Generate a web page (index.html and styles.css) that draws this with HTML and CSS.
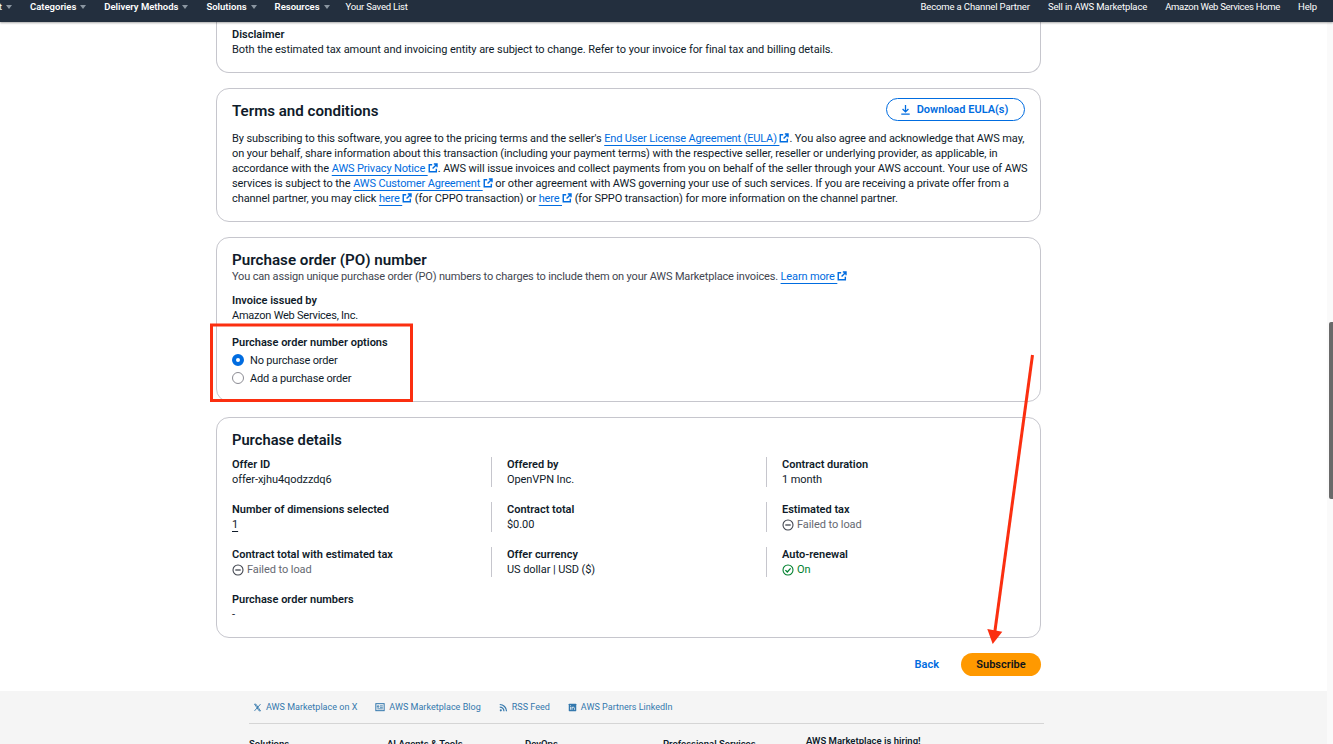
FILE: index.html
```html
<!DOCTYPE html>
<html lang="en">
<head>
<meta charset="utf-8">
<title>Subscribe - AWS Marketplace</title>
<link rel="stylesheet" href="styles.css">
</head>
<body>
<svg width="0" height="0" class="defs">
  <symbol id="ext" viewBox="0 0 12 12"><path d="M5 2H1.500v8.500H10V7M7 1.200h3.800V5M10.600 1.400 5.500 6.500" fill="none" stroke="currentColor" stroke-width="1.700"/></symbol>
  <symbol id="minus" viewBox="0 0 12 12"><circle cx="6" cy="6" r="5" fill="none" stroke="currentColor" stroke-width="1.100"/><path d="M3.300 6h5.400" stroke="currentColor" stroke-width="1.300"/></symbol>
</svg>
<header class="topbar">
  <nav class="nav-left">
    <span class="nav-item nav-cut">t<i class="caret"></i></span>
    <span class="nav-item strong">Categories<i class="caret"></i></span>
    <span class="nav-item strong">Delivery Methods<i class="caret"></i></span>
    <span class="nav-item strong">Solutions<i class="caret"></i></span>
    <span class="nav-item strong">Resources<i class="caret"></i></span>
    <span class="nav-item nav-saved">Your Saved List</span>
  </nav>
  <nav class="nav-right">
    <span class="nav-item">Become a Channel Partner</span>
    <span class="nav-item">Sell in AWS Marketplace</span>
    <span class="nav-item nav-home">Amazon Web Services Home</span>
    <span class="nav-item">Help</span>
  </nav>
</header>
<main class="column">
  <section class="card card-first">
    <div class="label">Disclaimer</div>
    <div class="value">Both the estimated tax amount and invoicing entity are subject to change. Refer to your invoice for final tax and billing details.</div>
  </section>
  <section class="card card-terms">
    <div class="terms-head">
      <h2 class="title title-terms">Terms and conditions</h2>
      <a class="btn-outline"><svg class="dl" viewBox="0 0 12 12"><path d="M6 1v7.200M2.800 5.400 6 8.600l3.200-3.200M1.400 11h9.200" fill="none" stroke="currentColor" stroke-width="1.400"/></svg>Download EULA(s)</a>
    </div>
    <p class="para">By subscribing to this software, you agree to the pricing terms and the seller's <a class="link">End User License Agreement (EULA)&nbsp;</a><svg class="ext"><use href="#ext"/></svg>. You also agree and acknowledge that AWS may,<br>on your behalf, share information about this transaction (including your payment terms) with the respective seller, reseller or underlying provider, as applicable, in<br>accordance with the <a class="link">AWS Privacy Notice&nbsp;</a><svg class="ext"><use href="#ext"/></svg>. AWS will issue invoices and collect payments from you on behalf of the seller through your AWS account. Your use of AWS<br>services is subject to the <a class="link">AWS Customer Agreement&nbsp;</a><svg class="ext"><use href="#ext"/></svg> or other agreement with AWS governing your use of such services. If you are receiving a private offer from a<br>channel partner, you may click <a class="link">here&nbsp;</a><svg class="ext"><use href="#ext"/></svg> (for CPPO transaction) or <a class="link">here&nbsp;</a><svg class="ext"><use href="#ext"/></svg> (for SPPO transaction) for more information on the channel partner.</p>
  </section>
  <section class="card card-po">
    <h2 class="title title-po">Purchase order (PO) number</h2>
    <div class="desc">You can assign unique purchase order (PO) numbers to charges to include them on your AWS Marketplace invoices. <a class="link">Learn more&nbsp;</a><svg class="ext"><use href="#ext"/></svg></div>
    <div class="field-invoice">
      <div class="label">Invoice issued by</div>
      <div class="value value-tight">Amazon Web Services, Inc.</div>
    </div>
    <div class="label options-label">Purchase order number options</div>
    <div class="radio-row"><i class="radio radio-on"></i>No purchase order</div>
    <div class="radio-row"><i class="radio"></i>Add a purchase order</div>
  </section>
  <section class="card card-details">
    <h2 class="title title-details">Purchase details</h2>
    <div class="grid">
      <div class="cell"><div class="label">Offer ID</div><div class="value">offer-xjhu4qodzzdq6</div></div>
      <div class="cell cell-mid"><div class="label">Offered by</div><div class="value">OpenVPN Inc.</div></div>
      <div class="cell cell-mid"><div class="label">Contract duration</div><div class="value">1 month</div></div>
      <div class="cell"><div class="label">Number of dimensions selected</div><div class="value"><span class="under">1</span></div></div>
      <div class="cell cell-mid"><div class="label">Contract total</div><div class="value">$0.00</div></div>
      <div class="cell cell-mid"><div class="label">Estimated tax</div><div class="value status-muted"><svg class="status"><use href="#minus"/></svg>Failed to load</div></div>
      <div class="cell"><div class="label">Contract total with estimated tax</div><div class="value status-muted"><svg class="status"><use href="#minus"/></svg>Failed to load</div></div>
      <div class="cell cell-mid"><div class="label">Offer currency</div><div class="value">US dollar | USD ($)</div></div>
      <div class="cell cell-mid"><div class="label">Auto-renewal</div><div class="value status-ok"><svg class="status" viewBox="0 0 12 12"><circle cx="6" cy="6" r="5" fill="none" stroke="currentColor" stroke-width="1.100"/><path d="M3.400 6.100 5.300 8l3.300-3.600" fill="none" stroke="currentColor" stroke-width="1.300"/></svg>On</div></div>
      <div class="cell"><div class="label">Purchase order numbers</div><div class="value">-</div></div>
    </div>
  </section>
  <div class="actions">
    <a class="back">Back</a>
    <a class="subscribe">Subscribe</a>
  </div>
</main>
<footer class="footer">
  <div class="footer-inner">
    <div class="social">
      <a class="social-link"><svg class="si" viewBox="0 0 12 12"><path d="M2 1.500h1.800l6.200 9H8.200zM10 1.500 2 10.500" fill="none" stroke="currentColor" stroke-width="1.200"/></svg>AWS Marketplace on X</a>
      <a class="social-link"><svg class="si si-wide" viewBox="0 0 12 12"><rect x="1" y="2" width="10" height="8.400" fill="none" stroke="currentColor" stroke-width="1.200"/><path d="M2.800 4.600h1.800v1.600H2.800zM6 4.600h3.400M6 6.400h3.400M2.800 8.200h6.600" fill="none" stroke="currentColor" stroke-width="1"/></svg>AWS Marketplace Blog</a>
      <a class="social-link"><svg class="si" viewBox="0 0 12 12"><circle cx="2.400" cy="9.800" r="1.400" fill="currentColor"/><path d="M1 5.400a5.600 5.600 0 0 1 5.600 5.600M1 2a9 9 0 0 1 9 9" fill="none" stroke="currentColor" stroke-width="1.600"/></svg>RSS Feed</a>
      <a class="social-link"><svg class="si" viewBox="0 0 12 12"><rect x="1" y="1" width="10" height="10" rx=".6" fill="currentColor"/><path d="M3.400 5v4M5.400 9V5M5.400 6.600c.4-1.300 3.200-1.500 3.200.6V9M3.400 3v1" fill="none" stroke="#f5f5f5" stroke-width="1.100"/></svg>AWS Partners LinkedIn</a>
    </div>
    <div class="footer-cols">
      <div class="fcol">Solutions</div>
      <div class="fcol">AI Agents &amp; Tools</div>
      <div class="fcol">DevOps</div>
      <div class="fcol fcol-wide">Professional Services</div>
      <div class="fcol fcol-hiring">AWS Marketplace is hiring!</div>
    </div>
  </div>
</footer>
<svg class="annot" viewBox="0 0 1333 744">
  <rect x="211.500" y="325" width="200" height="75.500" fill="none" stroke="#fb2f10" stroke-width="3"/>
  <path d="M1032.500 355 994.800 632" fill="none" stroke="#fb2f10" stroke-width="3"/>
  <path d="M987.300 629 1002.300 631.700 992.700 644z" fill="#fb2f10"/>
</svg>
<div class="scrollbar"><div class="thumb"></div></div>
</body>
</html>
```

FILE: styles.css
```css
* { box-sizing: border-box; }
html, body { margin: 0; height: 744px; overflow: hidden; }
body {
  font-family: Roboto, "Noto Sans", sans-serif;
  font-size: 11px;
  letter-spacing: -0.07px;
  line-height: 15px;
  color: #0f1b2a;
  background: #fff;
  display: flex;
  flex-direction: column;
  position: relative;
}
.defs { position: absolute; }
.topbar {
  height: 22px;
  flex: none;
  background: #232f3e;
  box-shadow: 0 1px 2px rgba(0,0,0,.35);
  color: #fff;
  display: flex;
  justify-content: space-between;
  align-items: flex-start;
  font-size: 9.500px;
  letter-spacing: -0.13px;
  line-height: 14px;
  position: relative;
  z-index: 2;
  padding-right: 16px;
}
.nav-left, .nav-right { display: flex; align-items: center; }
.nav-left { gap: 18px; margin-left: -1px; }
.nav-right { gap: 18px; }
.strong { font-weight: 600; letter-spacing: 0; }
.nav-saved { margin-left: -2px; letter-spacing: -0.2px; }
.nav-home { letter-spacing: -0.3px; }
.nav-item { white-space: nowrap; }
.caret {
  display: inline-block;
  margin-left: 4px;
  vertical-align: 1px;
  border: 3.500px solid transparent;
  border-top: 4px solid #8b96a1;
  border-bottom: 0;
}
.column {
  width: 825px;
  margin-left: 216px;
  flex: none;
  display: flex;
  flex-direction: column;
  gap: 15px;
}
.card {
  border: 1px solid #c6c6cd;
  border-radius: 13px;
  padding: 0 15px;
}
.card-first {
  border-top: 0;
  border-radius: 0 0 13px 13px;
  height: 51px;
  padding-top: 5px;
}
.card-terms { height: 134px; padding-top: 9px; }
.card-po { height: 165px; padding-top: 13px; }
.card-details { height: 221px; padding-top: 13px; }
.label { font-weight: 600; letter-spacing: 0; }
.value-tight { letter-spacing: -0.23px; }
.title { margin: 0; font-size: 15.100px; line-height: 18px; font-weight: 600; letter-spacing: 0; }
.terms-head { display: flex; justify-content: space-between; align-items: center; height: 26px; margin-bottom: 7px; }
.btn-outline {
  align-self: flex-start;
  width: 139px;
  height: 23px;
  padding-right: 3px;
  border: 1px solid #006ce0;
  border-radius: 12px;
  color: #006ce0;
  font-weight: 600;
  letter-spacing: 0;
  display: flex;
  align-items: center;
  justify-content: center;
  gap: 6px;
}
.dl { width: 11px; height: 11px; }
.para { margin: 0; white-space: nowrap; letter-spacing: -0.09px; }
.link { color: #006ce0; letter-spacing: -0.15px; text-decoration: underline; text-underline-offset: 3px; text-decoration-thickness: 1px; }
.ext { width: 10px; height: 10px; color: #006ce0; vertical-align: -1px; }
.desc { color: #424650; letter-spacing: -0.16px; white-space: nowrap; }
.title-po { font-size: 15.200px; }
.title-details { font-size: 14.700px; }
.field-invoice { margin-top: 9px; }
.options-label { margin-top: 12px; margin-bottom: 1px; }
.radio-row { display: flex; align-items: center; gap: 6px; height: 18px; letter-spacing: -0.17px; }
.radio {
  width: 12px;
  height: 12px;
  border-radius: 50%;
  border: 1px solid #8c8c94;
  background: #fff;
}
.radio-on { border: 4px solid #006ce0; }
.grid {
  display: grid;
  grid-template-columns: 275px 275px 1fr;
  row-gap: 15px;
  margin-top: 8px;
}
.cell { height: 30px; }
.cell-mid { border-left: 1px solid #c6c6cd; padding-left: 15px; margin-left: -16px; }
.under { text-decoration: underline; text-underline-offset: 3px; }
.status-muted { color: #656871; }
.status-ok { color: #00802f; }
.status { width: 12px; height: 12px; vertical-align: -2.500px; margin-right: 3px; color: inherit; }
.status-muted .status { color: #424650; }
.actions {
  display: flex;
  justify-content: flex-end;
  align-items: center;
  gap: 22px;
  height: 23px;
  font-weight: 600;
  letter-spacing: 0;
}
.back { color: #006ce0; }
.subscribe {
  width: 80px;
  height: 23px;
  border-radius: 12px;
  background: #ff9900;
  color: #0f141a;
  display: flex;
  align-items: center;
  justify-content: center;
}
.footer {
  margin-top: 15px;
  flex: 1;
  background: #f5f5f5;
  overflow: hidden;
}
.footer-inner { width: 795px; margin-left: 249px; }
.social {
  display: flex;
  gap: 18px;
  height: 32px;
  align-items: center;
  padding: 0 4px;
  border-bottom: 1px solid #d5d5d5;
  box-sizing: content-box;
  font-size: 9px;
  letter-spacing: 0.02px;
}
.social-link { color: #3478ad; display: flex; align-items: center; gap: 4px; }
.si { width: 9px; height: 9px; }
.si-wide { width: 10px; height: 10px; }
.footer-cols { display: flex; margin-top: 12px; font-size: 9.500px; font-weight: 600; letter-spacing: 0; }
.fcol { width: 138px; }
.fcol-wide { width: 143px; }
.fcol-hiring { margin-top: -3px; width: auto; }
.annot { position: absolute; left: 0; top: 0; width: 1333px; height: 744px; z-index: 3; pointer-events: none; }
.scrollbar { position: absolute; right: 0; top: 0; bottom: 0; width: 6px; background: #fafafa; z-index: 1; }
.thumb { position: absolute; right: 0; top: 322px; width: 4px; height: 177px; background: #6a6a6a; border-radius: 2px 0 0 2px; }
```
